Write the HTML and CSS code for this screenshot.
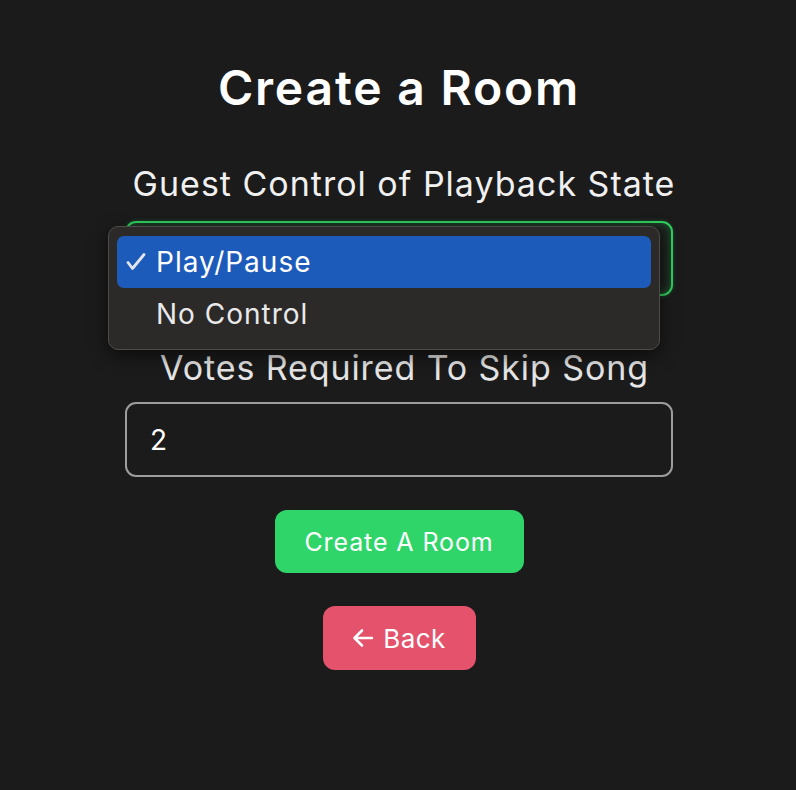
FILE: index.html
```html
<!DOCTYPE html>
<html lang="en">
<head>
<meta charset="utf-8">
<title>Create a Room</title>
<link rel="stylesheet" href="styles.css">
</head>
<body>
<main class="page">
  <h1 class="title">Create a Room</h1>

  <label class="field-label">Guest Control of Playback State</label>
  <div class="select-wrap">
    <div class="select-box"></div>
    <ul class="popup">
      <li class="option selected">
        <svg class="check" width="20" height="18" viewBox="0 0 20 18"><path d="M2 9.5 L6.5 15.5 L18 1.5" fill="none" stroke="#e3e6ec" stroke-width="2.8" stroke-linecap="round" stroke-linejoin="round"/></svg>
        <span>Play/Pause</span>
      </li>
      <li class="option"><span>No Control</span></li>
    </ul>
  </div>

  <label class="field-label second">Votes Required To Skip Song</label>
  <div class="input-box">2</div>

  <button class="btn btn-create">Create A Room</button>
  <button class="btn btn-back">
    <svg class="arrow" width="22" height="20" viewBox="0 0 22 20"><path d="M20 10 H3 M10 2.5 L2.5 10 L10 17.5" fill="none" stroke="#ffffff" stroke-width="2.6" stroke-linecap="round" stroke-linejoin="round"/></svg>
    <span>Back</span>
  </button>
</main>
</body>
</html>
```

FILE: styles.css
```css
* { box-sizing: border-box; }

html, body {
  margin: 0;
  padding: 0;
  background: #1b1b1b;
  height: 100%;
}

body {
  font-family: Inter, "Liberation Sans", sans-serif;
  color: #f2f2f2;
}

.page {
  width: 548px;
  margin: 0 auto;
  padding-top: 60px;
  display: flex;
  flex-direction: column;
  align-items: center;
  transform: translateX(1px);
}

.title {
  margin: 0;
  font-size: 48px;
  line-height: 56px;
  font-weight: 600;
  color: #ffffff;
  letter-spacing: 1.8px;
}

.field-label {
  margin-top: 48px;
  padding-left: 10px;
  font-size: 34px;
  line-height: 40px;
  font-weight: 400;
  color: #f0f0f0;
  letter-spacing: 1px;
  white-space: nowrap;
}

.field-label.second {
  margin-top: 52px;
  padding-left: 11px;
  color: #e6e6e6;
  letter-spacing: 0.9px;
}

.select-wrap {
  position: relative;
  width: 548px;
  margin-top: 17px;
}

.select-box {
  height: 75px;
  border: 2px solid #2fcf5e;
  border-radius: 11px;
  background: #1b1f1c;
  box-shadow: inset 0 0 8px rgba(47, 207, 94, 0.35), 0 0 4px rgba(47, 207, 94, 0.25);
}

.popup {
  position: absolute;
  left: -17px;
  top: 5px;
  width: 552px;
  height: 124px;
  margin: 0;
  padding: 9px 8px;
  list-style: none;
  background: #2b2a29;
  border: 1px solid #4d4c4b;
  border-radius: 10px;
  box-shadow: 0 6px 18px rgba(0, 0, 0, 0.55);
}

.option {
  height: 52px;
  display: flex;
  align-items: center;
  padding-left: 39px;
  position: relative;
  font-size: 28px;
  color: #e9e9e9;
  border-radius: 7px;
  letter-spacing: 1px;
}

.option.selected {
  background: #1d5bba;
  color: #ffffff;
}

.check {
  position: absolute;
  left: 9px;
  top: 17px;
}

.input-box {
  width: 548px;
  height: 75px;
  margin-top: 14px;
  border: 2px solid #9d9d9d;
  border-radius: 11px;
  padding-left: 23px;
  display: flex;
  align-items: center;
  font-size: 28px;
  color: #ffffff;
}

.btn {
  border: none;
  font-family: Inter, "Liberation Sans", sans-serif;
  font-size: 25px;
  color: #ffffff;
  display: flex;
  align-items: center;
  justify-content: center;
  border-radius: 12px;
  padding: 0;
}

.btn-create {
  margin-top: 33px;
  width: 249px;
  height: 63px;
  background: #30d56a;
  letter-spacing: 0.9px;
}

.btn-back {
  margin-top: 33px;
  width: 153px;
  height: 64px;
  background: #e4526b;
  gap: 9px;
  font-size: 26px;
  letter-spacing: 0.5px;
}

.arrow {
  display: block;
}
```
